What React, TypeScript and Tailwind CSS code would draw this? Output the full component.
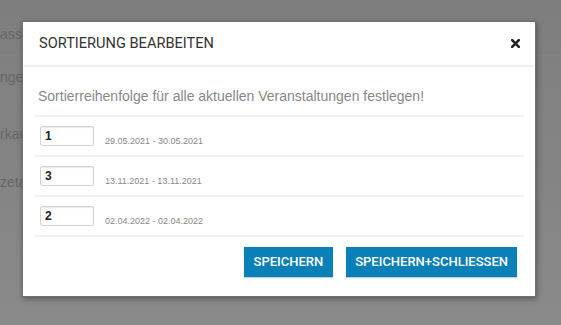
const bgRows = [
  { label: 'asse', h: 'h-[42px]' },
  { label: 'ngez', h: 'h-[44px]' },
  { label: 'rkau', h: 'h-[70px]' },
  { label: 'zeta', h: 'h-[26px]' },
];

const rows = [
  { value: '1', dates: '29.05.2021 - 30.05.2021' },
  { value: '3', dates: '13.11.2021 - 13.11.2021' },
  { value: '2', dates: '02.04.2022 - 02.04.2022' },
];

export default function App() {
  return (
    <div className="relative w-[561px] h-[325px] overflow-hidden bg-gradient-to-b from-[#7e7e7e] to-[#8a8a8a] font-['Roboto',sans-serif]">
      {/* page behind the overlay */}
      <div className="flex flex-col pt-[14px]">
        {bgRows.map((r) => (
          <div
            key={r.label}
            className={`${r.h} flex items-center border-b border-[#838383] text-[14px] text-[#666] font-['Liberation_Sans',sans-serif]`}
          >
            <span>{r.label}</span>
          </div>
        ))}
      </div>

      {/* modal */}
      <div className="absolute left-[22px] top-[21px] w-[514px] h-[276px] bg-white border border-[#6f6f6f] shadow-[1px_2px_6px_rgba(0,0,0,0.35)] flex flex-col">
        <div className="h-[45px] flex items-center justify-between pl-[15px] pr-[14px] border-b-2 border-[#eeeeee] mx-[1px]">
          <h2 className="text-[14.6px] text-[#333]">SORTIERUNG BEARBEITEN</h2>
          <svg width="9" height="9" viewBox="0 0 9 9" className="text-[#222]">
            <path d="M1.2 1.2 L7.8 7.8 M7.8 1.2 L1.2 7.8" stroke="currentColor" strokeWidth="2.6" strokeLinecap="square" />
          </svg>
        </div>

        <div className="flex flex-col px-[11px]">
          <p className="pt-[19px] pb-[9px] pl-[4px] text-[14px] leading-[20px] text-[#888] font-['Liberation_Sans',sans-serif]">
            Sortierreihenfolge für alle aktuellen Veranstaltungen festlegen!
          </p>
          <div className="flex flex-col border-t-2 border-[#f2f2f2]">
            {rows.map((r) => (
              <div
                key={r.dates}
                className="h-[40px] flex items-end gap-[11px] pl-[6px] pb-[9px] border-b-2 border-[#f2f2f2]"
              >
                <input
                  readOnly
                  value={r.value}
                  className="w-[54px] h-[20px] px-[4px] border border-[#d2d2d2] rounded-[2px] shadow-[inset_0_1px_1px_rgba(0,0,0,0.08)] text-[12px] font-bold text-[#222] font-['Liberation_Sans',sans-serif] outline-none"
                />
                <span className="text-[9px] leading-[10px] text-[#888] font-['Liberation_Sans',sans-serif]">
                  {r.dates}
                </span>
              </div>
            ))}
          </div>
        </div>

        <div className="flex justify-end gap-[13px] pt-[10px] pr-[18px]">
          <button className="h-[30px] px-[10px] bg-[#0a80b8] text-white text-[13px] font-medium shadow-[0_1px_1px_rgba(0,0,0,0.2)]">
            SPEICHERN
          </button>
          <button className="h-[30px] px-[9px] bg-[#0a80b8] text-white text-[13px] font-medium shadow-[0_1px_1px_rgba(0,0,0,0.2)]">
            SPEICHERN+SCHLIESSEN
          </button>
        </div>
      </div>
    </div>
  );
}
